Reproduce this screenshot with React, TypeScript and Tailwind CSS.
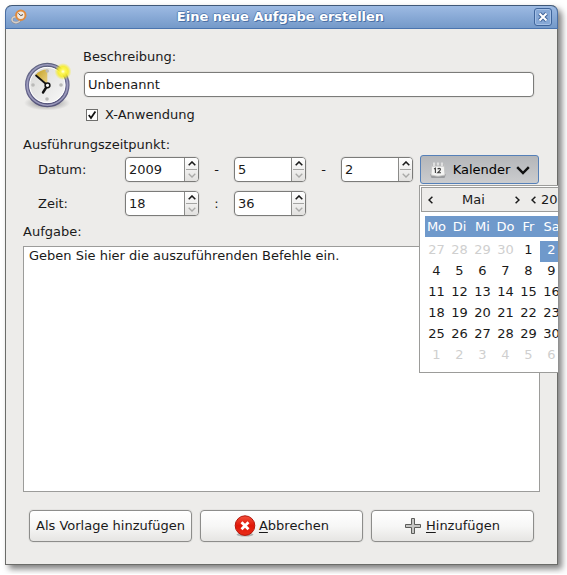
import React from "react";

const days = ["Mo", "Di", "Mi", "Do", "Fr", "Sa"];

const weeks: number[][] = [
  [27, 28, 29, 30, 1, 2],
  [4, 5, 6, 7, 8, 9],
  [11, 12, 13, 14, 15, 16],
  [18, 19, 20, 21, 22, 23],
  [25, 26, 27, 28, 29, 30],
  [1, 2, 3, 4, 5, 6],
];

function isOutside(week: number, day: number) {
  return (week === 0 && day > 20) || week === 5;
}

function ClockIcon() {
  return (
    <svg width="48" height="50" viewBox="0 0 48 50" className="shrink-0" aria-hidden="true">
      <defs>
        <radialGradient id="clock-glow">
          <stop offset="0" stopColor="#fffff0" />
          <stop offset="0.25" stopColor="#fff95a" />
          <stop offset="0.6" stopColor="#f8ee1c" stopOpacity="0.85" />
          <stop offset="1" stopColor="#f4ea20" stopOpacity="0" />
        </radialGradient>
        <radialGradient id="clock-shadow">
          <stop offset="0" stopColor="#555" stopOpacity="0.8" />
          <stop offset="1" stopColor="#777" stopOpacity="0" />
        </radialGradient>
        <linearGradient id="clock-face" x1="0" y1="0" x2="1" y2="1">
          <stop offset="0" stopColor="#d6d6d4" />
          <stop offset="1" stopColor="#fafafa" />
        </linearGradient>
        <linearGradient id="clock-ring" x1="0" y1="0" x2="0" y2="1">
          <stop offset="0" stopColor="#5f6480" />
          <stop offset="0.5" stopColor="#6c6b92" />
          <stop offset="1" stopColor="#55547a" />
        </linearGradient>
        <linearGradient id="clock-wedge" x1="0" y1="0" x2="1" y2="1">
          <stop offset="0" stopColor="#c39e1e" />
          <stop offset="1" stopColor="#ecd58a" />
        </linearGradient>
      </defs>
      <ellipse cx="24" cy="42" rx="23" ry="7.5" fill="url(#clock-shadow)" />
      <circle cx="24.3" cy="24" r="20.2" fill="url(#clock-face)" stroke="url(#clock-ring)" strokeWidth="4.2" />
      <circle cx="24.3" cy="24" r="20.2" fill="none" stroke="#9c9bbd" strokeWidth="1.6" />
      <circle cx="24.3" cy="24" r="17.6" fill="none" stroke="#fff" strokeWidth="1" />
      <path d="M24.3 24 L12.5 14 Q17 8.5 24.3 8.5 Z" fill="url(#clock-wedge)" />
      <g fill="#babab8">
        <circle cx="24.3" cy="10" r="1.8" />
        <circle cx="38" cy="24" r="1.8" />
        <circle cx="24" cy="38" r="1.8" />
        <circle cx="10" cy="24" r="1.8" />
      </g>
      <path d="M13 14.5 L23 23" stroke="#111" strokeWidth="1.7" strokeLinecap="round" />
      <path d="M23.5 26 L20 31.5" stroke="#111" strokeWidth="2.4" strokeLinecap="round" />
      <circle cx="24.5" cy="24.3" r="2.4" fill="#f4f4f4" stroke="#111" strokeWidth="1.5" />
      <circle cx="40" cy="10.5" r="8.5" fill="url(#clock-glow)" />
    </svg>
  );
}

function AppIcon() {
  return (
    <svg width="16" height="16" viewBox="0 0 16 16" aria-hidden="true">
      <ellipse cx="5" cy="10.8" rx="4" ry="3" fill="none" stroke="#8d8f9c" strokeWidth="2.4" />
      <ellipse cx="5" cy="10.6" rx="4" ry="3" fill="none" stroke="#d5cfc8" strokeWidth="1.6" />
      <circle cx="9.8" cy="6.2" r="4.7" fill="#eee9e2" stroke="#e08a3c" strokeWidth="2" />
      <path d="M9.8 6.6 L7.4 4.4 M9.8 6.6 L12 5.6" stroke="#5b4636" strokeWidth="1" fill="none" />
    </svg>
  );
}

function CalendarIcon() {
  return (
    <svg width="18" height="18" viewBox="0 0 18 18" aria-hidden="true">
      <path d="M1 13 L17 13 L15.5 17 L2.5 17 Z" fill="#77797b" opacity="0.55" />
      <path d="M3 3 H15 L16 14 Q9 16.5 2 14 Z" fill="#f4f4f3" stroke="#c3c3c1" strokeWidth="0.8" />
      <path d="M3 3 H15 L15.3 5.4 H2.8 Z" fill="#b9babb" />
      <path d="M5 1.5 V5 M9 1.5 V4.5 M13 1.5 V5" stroke="#eeeeee" strokeWidth="1.4" />
      <path
        d="M5 8 L6.4 7.2 V12 M8.6 8.2 Q10 6.8 11.3 7.8 Q12 9 8.8 11.7 H12"
        stroke="#3c3c3c"
        strokeWidth="1.1"
        fill="none"
      />
    </svg>
  );
}

function CancelIcon() {
  return (
    <svg width="22" height="22" viewBox="0 0 22 22" aria-hidden="true">
      <defs>
        <linearGradient id="cancel-red" x1="0" y1="0" x2="0" y2="1">
          <stop offset="0" stopColor="#f4503c" />
          <stop offset="0.5" stopColor="#e01708" />
          <stop offset="1" stopColor="#ea2c18" />
        </linearGradient>
      </defs>
      <ellipse cx="11" cy="19.6" rx="8.5" ry="2" fill="#000" opacity="0.25" />
      <circle cx="11" cy="10.6" r="9.8" fill="url(#cancel-red)" stroke="#b3150a" strokeWidth="1" />
      <path d="M7.5 7.2 L14.5 14.2 M14.5 7.2 L7.5 14.2" stroke="#fff" strokeWidth="2.8" />
    </svg>
  );
}

function PlusIcon() {
  return (
    <svg width="16" height="16" viewBox="0 0 16 16" aria-hidden="true">
      <path
        d="M6.5 0.5 H9.5 V6.5 H15.5 V9.5 H9.5 V15.5 H6.5 V9.5 H0.5 V6.5 H6.5 Z"
        fill="#c6c6c4"
        stroke="#5c5d5a"
      />
    </svg>
  );
}

function Spin({ label, value, wide }: { label: string; value: string; wide?: boolean }) {
  return (
    <div
      className={`flex h-[25px] shrink-0 overflow-hidden rounded-[4px] border border-[#7b7b79] bg-white shadow-[0_0_0_1px_#e2e1df] ${
        wide ? "w-[74px]" : "w-[72px]"
      }`}
    >
      <input
        aria-label={label}
        defaultValue={value}
        inputMode="numeric"
        className="w-0 min-w-0 flex-1 bg-transparent pl-[3px] outline-none"
      />
      <div className="flex w-[14px] flex-col border-l border-[#8b8b89] bg-gradient-to-b from-white to-[#e2e1df]">
        <button
          type="button"
          aria-label={`${label} erhöhen`}
          className="flex flex-1 items-center justify-center"
        >
          <svg width="8" height="5" viewBox="0 0 8 5">
            <path d="M0.7 4.2 L4 1 L7.3 4.2" fill="none" stroke="#1a1a1a" strokeWidth="1.6" />
          </svg>
        </button>
        <div className="mx-px h-px bg-[#a5a5a3]" />
        <button
          type="button"
          aria-label={`${label} verringern`}
          className="flex flex-1 items-center justify-center"
        >
          <svg width="8" height="5" viewBox="0 0 8 5">
            <path d="M0.7 0.8 L4 4 L7.3 0.8" fill="none" stroke="#a9a9a7" strokeWidth="1.3" />
          </svg>
        </button>
      </div>
    </div>
  );
}

function Separator({ children }: { children: React.ReactNode }) {
  return <span className="w-[35px] shrink-0 text-center">{children}</span>;
}

function Arrow({ label, left }: { label: string; left?: boolean }) {
  return (
    <button type="button" aria-label={label} className="flex h-5 w-4 items-center justify-center">
      <svg width="5" height="8" viewBox="0 0 5 8">
        <path
          d={left ? "M4.4 0.7 L1 4 L4.4 7.3" : "M0.6 0.7 L4 4 L0.6 7.3"}
          fill="none"
          stroke="#1a1a1a"
          strokeWidth="1.5"
        />
      </svg>
    </button>
  );
}

function CalendarPopup() {
  return (
    <div className="absolute top-[30px] right-[-19px] left-[-1px] z-10 h-[188px] overflow-hidden border-y border-l border-[#9c9c9a] bg-white pt-px pl-px">
      <div className="flex h-[25px] items-center border-y border-l border-[#9c9c9a] bg-[#edecea]">
        <Arrow label="Voriger Monat" left />
        <span className="w-[71px] text-center">Mai</span>
        <Arrow label="Nächster Monat" />
        <Arrow label="Voriges Jahr" left />
        <span className="whitespace-nowrap">20</span>
      </div>
      <table className="mt-1 ml-[4px] w-[138px] table-fixed border-collapse text-center">
        <thead>
          <tr className="h-[21px] bg-[#6f99cb] text-white">
            {days.map((d) => (
              <th key={d} scope="col" className="p-0 leading-[21px] font-normal">
                {d}
              </th>
            ))}
          </tr>
        </thead>
        <tbody className="before:block before:h-1">
          {weeks.map((week, w) => (
            <tr key={w} className="h-[21px]">
              {week.map((day) => (
                <td
                  key={day}
                  className={`p-0 pb-1 leading-[17px] ${
                    w === 0 && day === 2
                      ? "bg-[#6f99cb] text-white"
                      : isOutside(w, day)
                        ? "text-[#cfcfcf]"
                        : "text-[#1a1a1a]"
                  }`}
                >
                  {day}
                </td>
              ))}
            </tr>
          ))}
        </tbody>
      </table>
    </div>
  );
}

const actionButton =
  "flex h-8 items-center justify-center whitespace-nowrap rounded-[4px] border border-[#8d8d8b] bg-gradient-to-b from-white via-[#f7f7f6] to-[#e6e5e3] shadow-[0_0_0_1px_#e4e3e1]";

export default function App() {
  return (
    <div className="bg-white pt-[5px] pr-[9px] pb-[9px] pl-[5px] font-['DejaVu_Sans',sans-serif] text-[13px] leading-5 text-[#1a1a1a]">
      <main className="rounded-t-[7px] border border-t-0 border-[#6b6c69] bg-[#edecea] shadow-[4px_4px_6px_rgba(0,0,0,0.5)]">
        <header className="-mx-px flex h-6 items-center rounded-t-[7px] border border-t-[#3f5878] border-r-[#4a6fa5] border-b-[#4a74ae] border-l-[#4a6fa5] bg-gradient-to-b from-[#9dbae3] to-[#7499c9] px-[5px]">
          <span className="w-4 shrink-0">
            <AppIcon />
          </span>
          <h1 className="flex-1 text-center font-bold text-white [text-shadow:1px_1px_0_#4a70a5,-1px_0_0_#5c83b8,0_-1px_0_#5c83b8]">
            Eine neue Aufgabe erstellen
          </h1>
          <button
            type="button"
            aria-label="Schließen"
            className="flex h-[18px] w-[18px] shrink-0 items-center justify-center rounded-[3px] border border-[#3f659b] bg-[#86a8d6] shadow-[inset_0_0_0_1px_#a5c0e5]"
          >
            <svg width="12" height="12" viewBox="0 0 12 12">
              <path d="M2.5 2.5 L9.5 9.5 M9.5 2.5 L2.5 9.5" stroke="#41659a" strokeWidth="4" />
              <path d="M2.5 2.5 L9.5 9.5 M9.5 2.5 L2.5 9.5" stroke="#fff" strokeWidth="2" />
            </svg>
          </button>
        </header>

        <form className="px-[17px] pt-[18px] pb-[22px]" onSubmit={(e) => e.preventDefault()}>
          <div className="flex items-center gap-3 pr-[6px]">
            <ClockIcon />
            <div className="flex-1">
              <label htmlFor="description" className="block">
                Beschreibung:
              </label>
              <div className="mt-[5px] pl-px">
                <input
                  id="description"
                  defaultValue="Unbenannt"
                  className="block h-[25px] w-full rounded-[4px] border border-[#7b7b79] bg-white px-[3px] shadow-[0_0_0_1px_#e2e1df] outline-none"
                />
              </div>
              <label className="mt-2 ml-[3px] flex items-center gap-[7px]">
                <span className="grid">
                  <input
                    type="checkbox"
                    defaultChecked
                    className="peer col-start-1 row-start-1 h-3 w-3 appearance-none border border-[#6f6f6d] bg-white"
                  />
                  <svg
                    width="12"
                    height="12"
                    viewBox="0 0 12 12"
                    className="pointer-events-none invisible z-1 col-start-1 row-start-1 peer-checked:visible"
                    aria-hidden="true"
                  >
                    <path d="M2.8 6 L5 9 L9.4 2.6" fill="none" stroke="#111" strokeWidth="1.8" />
                  </svg>
                </span>
                X-Anwendung
              </label>
            </div>
          </div>

          <fieldset className="mt-[10px]">
            <legend>Ausführungszeitpunkt:</legend>
            <div className="flex items-center pr-px pl-[15px]">
              <span className="w-[87px] shrink-0">Datum:</span>
              <Spin label="Jahr" value="2009" wide />
              <Separator>-</Separator>
              <Spin label="Monat" value="5" />
              <Separator>-</Separator>
              <Spin label="Tag" value="2" />
              <div className="relative ml-[7px] flex-1">
                <button
                  type="button"
                  aria-expanded="true"
                  className="flex h-[29px] w-full items-center justify-center gap-[6px] rounded-[3px] border border-[#5580b8] bg-gradient-to-b from-[#b4b6b9] to-[#cbccce] pt-px text-black"
                >
                  <CalendarIcon />
                  <span>Kalender</span>
                  <svg width="14" height="9" viewBox="0 0 14 9" aria-hidden="true">
                    <path d="M1.2 1.2 L7 7 L12.8 1.2" fill="none" stroke="#111" strokeWidth="2.4" />
                  </svg>
                </button>
                <CalendarPopup />
              </div>
            </div>
            <div className="mt-[7px] flex items-center pl-[15px]">
              <span className="w-[87px] shrink-0">Zeit:</span>
              <Spin label="Stunde" value="18" wide />
              <Separator>:</Separator>
              <Spin label="Minute" value="36" />
            </div>
          </fieldset>

          <label htmlFor="task" className="mt-[6px] block">
            Aufgabe:
          </label>
          <textarea
            id="task"
            defaultValue="Geben Sie hier die auszuführenden Befehle ein."
            className="mt-1 block h-[246px] w-full resize-none border border-[#9c9c9a] bg-white px-[5px] py-0 leading-[17px] outline-none"
          />

          <div className="mt-[18px] grid grid-cols-3 gap-2 px-[6px]">
            <button type="button" className={actionButton}>
              Als Vorlage hinzufügen
            </button>
            <button type="button" className={`${actionButton} gap-[3px]`}>
              <CancelIcon />
              <span>
                <u className="underline-offset-2">A</u>bbrechen
              </span>
            </button>
            <button type="submit" className={`${actionButton} gap-[5px]`}>
              <PlusIcon />
              <span>
                <u className="underline-offset-2">H</u>inzufügen
              </span>
            </button>
          </div>
        </form>
      </main>
    </div>
  );
}
